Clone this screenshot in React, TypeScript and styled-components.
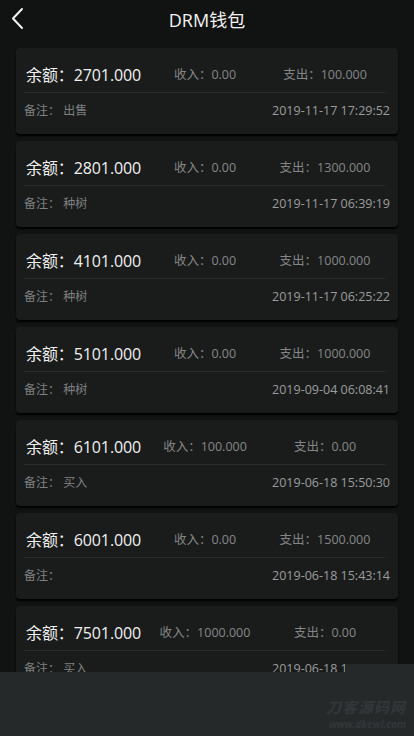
import React from "react";
import styled, { createGlobalStyle } from "styled-components";

const GlobalStyle = createGlobalStyle`
  html, body {
    margin: 0;
    padding: 0;
    background: #111212;
  }
  body {
    font-family: "Open Sans", "Noto Sans CJK SC", sans-serif;
    overflow: hidden;
  }
`;

const Page = styled.div`
  position: relative;
  width: 414px;
  height: 736px;
  overflow: hidden;
  background: #111212;
`;

const Header = styled.div`
  display: flex;
  align-items: center;
  justify-content: center;
  position: relative;
  height: 40px;
`;

const BackBtn = styled.div`
  position: absolute;
  left: 0;
  top: 0;
  width: 40px;
  height: 40px;
  display: flex;
  align-items: flex-start;
`;

const Title = styled.span`
  color: #f2f2f2;
  font-size: 18px;
  line-height: 40px;
`;

const List = styled.div`
  display: flex;
  flex-flow: column nowrap;
  gap: 7px;
  padding: 8px 16px 0;
`;

const Card = styled.div`
  display: flex;
  flex-flow: column nowrap;
  height: 86px;
  box-sizing: border-box;
  padding: 0 8px;
  background: #1a1c1c;
  border-radius: 4px;
  box-shadow: 0 2px 2px #000;
`;

const TopRow = styled.div`
  display: grid;
  grid-template-columns: 120px 118px 122px;
  align-items: center;
  height: 35px;
  padding: 8px 0 0 2px;
`;

const Balance = styled.span`
  color: #f0f0f0;
  font-size: 16px;
  letter-spacing: -0.1px;
  white-space: nowrap;
`;

const Stat = styled.span`
  color: #858787;
  font-size: 12.5px;
  text-align: center;
  white-space: nowrap;
`;

const Divider = styled.div`
  height: 1px;
  margin-top: 1px;
  background: #2a2d2d;
  margin-right: 5px;
`;

const BottomRow = styled.div`
  display: flex;
  align-items: center;
  justify-content: space-between;
  height: 34px;
`;

const Note = styled.span`
  color: #7e8080;
  font-size: 12px;
`;

const DateText = styled.span`
  color: #9a9c9c;
  font-size: 12.5px;
`;

const Overlay = styled.div`
  position: absolute;
  left: 0;
  right: 0;
  bottom: 0;
  height: 64px;
  background: #26292a;
  &::before {
    content: "";
    position: absolute;
    right: 0;
    top: -8px;
    width: 69px;
    height: 8px;
    background: #26292a;
  }
`;

const Watermark = styled.div`
  position: absolute;
  right: 8px;
  bottom: 6px;
  display: flex;
  flex-flow: column nowrap;
  align-items: flex-end;
  gap: 1px;
  color: #33373a;
  font-style: italic;
  font-weight: 700;
  line-height: 1.25;
`;

const WatermarkBig = styled.span`
  font-size: 15px;
  letter-spacing: 1px;
`;

const WatermarkSmall = styled.span`
  font-size: 10px;
`;

type Record = {
  balance: string;
  income: string;
  expense: string;
  note: string;
  date: string;
};

const records: Record[] = [
  { balance: "2701.000", income: "0.00", expense: "100.000", note: "出售", date: "2019-11-17 17:29:52" },
  { balance: "2801.000", income: "0.00", expense: "1300.000", note: "种树", date: "2019-11-17 06:39:19" },
  { balance: "4101.000", income: "0.00", expense: "1000.000", note: "种树", date: "2019-11-17 06:25:22" },
  { balance: "5101.000", income: "0.00", expense: "1000.000", note: "种树", date: "2019-09-04 06:08:41" },
  { balance: "6101.000", income: "100.000", expense: "0.00", note: "买入", date: "2019-06-18 15:50:30" },
  { balance: "6001.000", income: "0.00", expense: "1500.000", note: "", date: "2019-06-18 15:43:14" },
  { balance: "7501.000", income: "1000.000", expense: "0.00", note: "买入", date: "2019-06-18 14:49:50" },
];

const App = () => {
  return (
    <Page>
      <GlobalStyle />
      <Header>
        <BackBtn>
          <svg width="40" height="40" viewBox="0 0 40 40">
            <polyline
              points="22,9 13,18.5 22,28"
              fill="none"
              stroke="#f2f2f2"
              strokeWidth="2"
              strokeLinecap="round"
              strokeLinejoin="round"
            />
          </svg>
        </BackBtn>
        <Title>DRM钱包</Title>
      </Header>
      <List>
        {records.map((r, i) => (
          <Card key={i}>
            <TopRow>
              <Balance>余额：{r.balance}</Balance>
              <Stat>收入：{r.income}</Stat>
              <Stat>支出：{r.expense}</Stat>
            </TopRow>
            <Divider />
            <BottomRow>
              <Note>备注：&nbsp;{r.note}</Note>
              <DateText>{r.date}</DateText>
            </BottomRow>
          </Card>
        ))}
      </List>
      <Overlay>
        <Watermark>
          <WatermarkBig>刀客源码网</WatermarkBig>
          <WatermarkSmall>www.dkewl.com</WatermarkSmall>
        </Watermark>
      </Overlay>
    </Page>
  );
};

export default App;
